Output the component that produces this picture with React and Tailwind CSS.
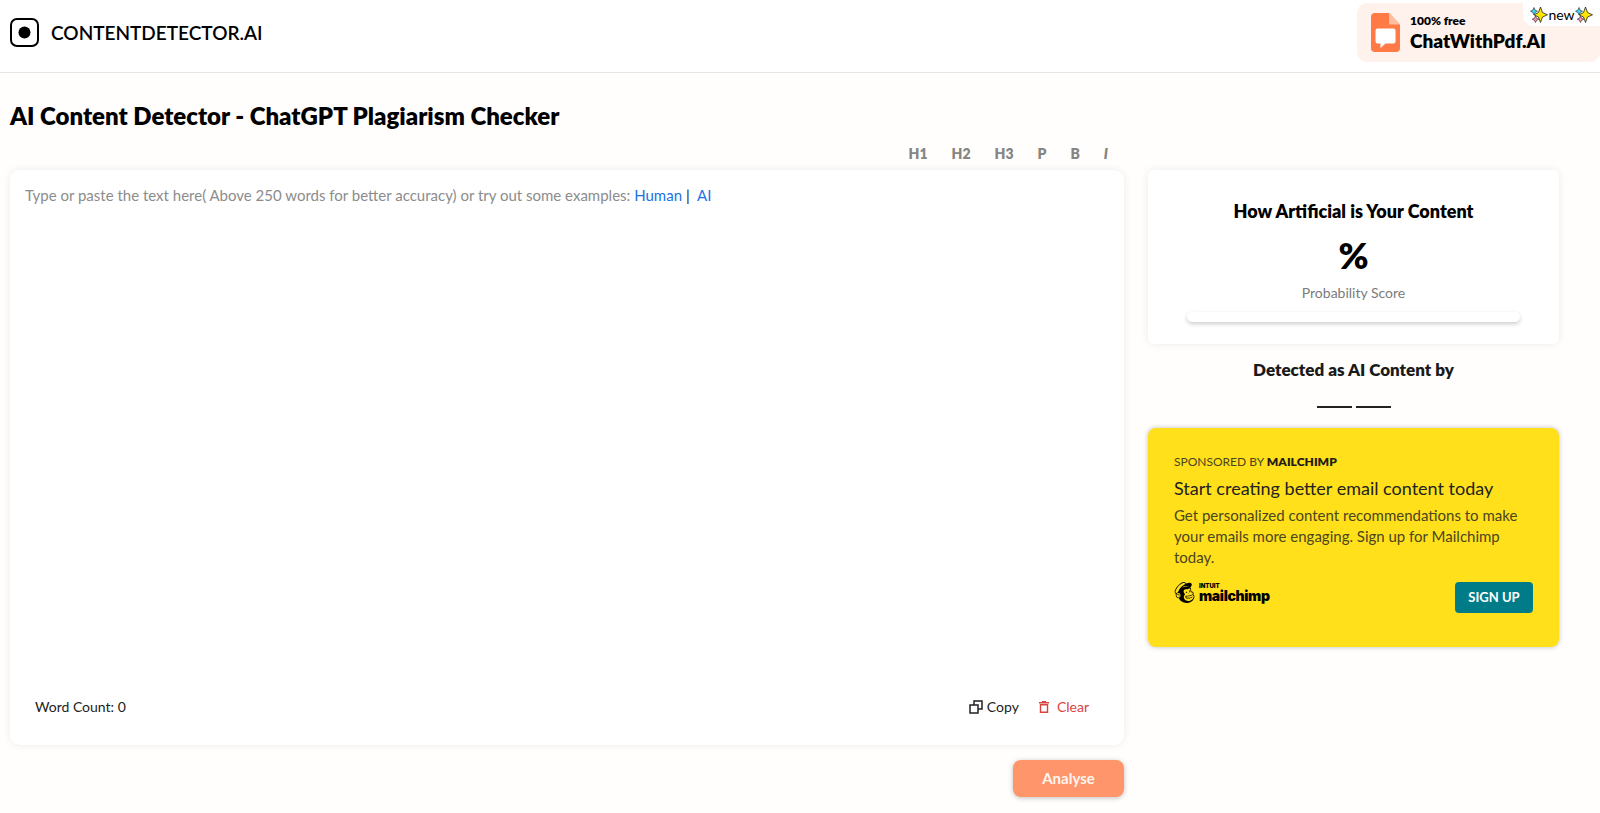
import { useState } from "react"
import { SiMailchimp } from "react-icons/si"

const formats = ["H1", "H2", "H3", "P", "B", "I"]

const examples = {
  human: "I grew up in a small town by the sea, and most mornings I walked to school along the harbour.",
  ai: "Artificial intelligence is a branch of computer science that focuses on creating intelligent systems.",
}

function Sparkles() {
  return (
    <svg width="18" height="18" viewBox="0 0 18 18" aria-hidden="true" className="shrink-0">
      <path
        d="M10.500 1 L12.500 6.500 L17.500 8.800 L12.500 11 L10.500 16.500 L8.500 11 L4 8.800 L8.500 6.500 Z"
        fill="#ffe600"
        stroke="#222"
        strokeWidth="0.8"
        strokeLinejoin="round"
      />
      <path d="M4 1.500 L5.200 4.200 L7.500 5.200 L5.200 6.400 L4 9 L2.800 6.400 L0.500 5.200 L2.800 4.200 Z" fill="#3fd6f7" stroke="#222" strokeWidth="0.6" />
      <path d="M5.500 10 L6.600 12.200 L8.800 13.200 L6.600 14.300 L5.500 16.500 L4.400 14.300 L2.200 13.200 L4.400 12.200 Z" fill="#f990a8" stroke="#222" strokeWidth="0.6" />
    </svg>
  )
}

function PdfIcon() {
  return (
    <svg width="29" height="39" viewBox="0 0 29 39" aria-hidden="true">
      <path d="M4 0 H18 L29 11.5 V35 A4 4 0 0 1 25 39 H4 A4 4 0 0 1 0 35 V4 A4 4 0 0 1 4 0 Z" fill="#ff7a45" />
      <path d="M18 0 L29 11.5 H18 Z" fill="#ffbda2" />
      <path d="M6.5 15.5 H22.5 A2 2 0 0 1 24.5 17.5 V28.5 A2 2 0 0 1 22.5 30.5 H14.5 L9.5 35 V30.5 H6.5 A2 2 0 0 1 4.5 28.5 V17.5 A2 2 0 0 1 6.5 15.5 Z" fill="#fff" />
    </svg>
  )
}

function Header() {
  return (
    <header className="flex h-[73px] items-start justify-between border-b border-[#e9e5e3] bg-white">
      <a href="#home" className="flex items-center gap-3 pt-[18px] pl-2.5 text-black">
        <svg width="29" height="29" viewBox="0 0 29 29" aria-hidden="true">
          <rect x="1" y="1" width="27" height="27" rx="6" fill="none" stroke="#000" strokeWidth="2" />
          <circle cx="14.5" cy="14.5" r="6" fill="#000" />
        </svg>
        <span className="text-[19px] leading-6 font-semibold">CONTENTDETECTOR.AI</span>
      </a>
      <a
        href="#chatwithpdf"
        className="relative mt-[3px] flex h-[59px] w-[243px] items-center gap-2.5 rounded-[10px] bg-[#fff1ec] pl-3.5 text-black"
      >
        <PdfIcon />
        <span className="flex flex-col">
          <span className="text-xs leading-4 font-extrabold">100% free</span>
          <span className="text-[19px] leading-6 font-extrabold">ChatWithPdf.AI</span>
        </span>
        <span className="absolute -top-[3px] right-0 flex h-[26px] w-[77px] items-center justify-center rounded-bl-[10px] bg-white pt-1 text-sm leading-4">
          <Sparkles />
          new
          <Sparkles />
        </span>
      </a>
    </header>
  )
}

function Editor() {
  const [text, setText] = useState("")
  const words = text.trim() ? text.trim().split(/\s+/).length : 0

  return (
    <section className="min-w-0 flex-1">
      <div className="flex h-[33px] items-center justify-end gap-6 pr-4 text-sm font-extrabold text-[#858585]">
        {formats.map((name) => (
          <button key={name} type="button" className={name === "I" ? "italic" : ""}>
            {name}
          </button>
        ))}
      </div>

      <div className="flex min-h-[575px] flex-col rounded-[10px] bg-white px-[15px] pt-[15px] pb-7 shadow-[0_0_8px_rgba(0,0,0,0.08)]">
        <label htmlFor="content" className="text-[15px] leading-5 text-[#8c8c8c]">
          Type or paste the text here( Above 250 words for better accuracy) or try out some examples:{" "}
          <a href="#human" onClick={() => setText(examples.human)} className="text-[#1a73e8]">
            Human
          </a>
          <span className="px-1 text-[#222]">|</span>{" "}
          <a href="#ai" onClick={() => setText(examples.ai)} className="text-[#1a73e8]">
            AI
          </a>
        </label>
        <textarea
          id="content"
          value={text}
          onChange={(e) => setText(e.target.value)}
          className="w-full flex-1 resize-none text-[15px] leading-5 outline-none"
        />
        <div className="flex items-center justify-between px-2.5 text-sm leading-5 text-[#222]">
          <span>Word Count: {words}</span>
          <div className="flex items-center gap-5 pr-2.5">
            <button type="button" onClick={() => navigator.clipboard.writeText(text)} className="flex items-center gap-1">
              <svg width="14" height="14" viewBox="0 0 14 14" fill="none" stroke="#222" strokeWidth="1.5" aria-hidden="true">
                <path d="M5 5 V1 H13 V9 H9" />
                <rect x="1" y="5" width="8" height="8" />
              </svg>
              Copy
            </button>
            <button type="button" onClick={() => setText("")} className="flex items-center gap-2 text-[#d9443f]">
              <svg width="10" height="12" viewBox="0 0 10 12" fill="none" stroke="#d9443f" strokeWidth="1.4" aria-hidden="true">
                <path d="M0 1.7 H10 M3 0.7 H7 M1.5 3.8 H8.5 V11.3 H1.5 Z" />
              </svg>
              Clear
            </button>
          </div>
        </div>
      </div>

      <div className="mt-[15px] flex justify-end">
        <button
          type="button"
          className="h-[37px] w-[111px] rounded-lg bg-[#ff956b] text-[15px] font-bold text-[#fff5f0] shadow-[0_1px_5px_rgba(0,0,0,0.25)]"
        >
          Analyse
        </button>
      </div>
    </section>
  )
}

function ScoreCard() {
  return (
    <section className="flex flex-col items-center rounded-md bg-white px-[39px] pt-[29px] pb-[22px] shadow-[0_0_8px_rgba(0,0,0,0.08)]">
      <h2 className="text-[18px] leading-6 font-extrabold text-black">How Artificial is Your Content</h2>
      <p className="mt-3 text-[36px] leading-10 font-extrabold text-black">%</p>
      <p className="mt-2 text-sm leading-5 text-[#7b7b7b]">Probability Score</p>
      <div
        role="progressbar"
        aria-label="Probability Score"
        className="mt-[9px] h-2.5 w-full rounded-md bg-white shadow-[0_2px_4px_rgba(0,0,0,0.2)]"
      />
    </section>
  )
}

function SponsorCard() {
  return (
    <section className="min-h-[219px] rounded-lg bg-[#ffe01b] px-[26px] pt-6 text-[#222] shadow-[0_0_5px_rgba(0,0,0,0.25)]">
      <p className="text-xs leading-5 text-[#4b4520]">
        SPONSORED BY <b className="font-extrabold text-[#241c15]">MAILCHIMP</b>
      </p>
      <h3 className="mt-1 text-[18px] leading-6">Start creating better email content today</h3>
      <p className="mt-[5px] text-[15px] leading-[21px] text-[#4b4520]">
        Get personalized content recommendations to make your emails more engaging. Sign up for Mailchimp today.
      </p>
      <div className="mt-3.5 flex items-start justify-between">
        <div className="flex items-center gap-1 text-black">
          <SiMailchimp size={21} />
          <div className="flex flex-col font-[Inter] font-black">
            <span className="text-[6px] leading-[6px]">INTUIT</span>
            <span className="text-sm leading-[14px] tracking-tight">mailchimp</span>
          </div>
        </div>
        <button type="button" className="h-[31px] w-[78px] rounded bg-[#007c89] text-[13px] font-bold text-white">
          SIGN UP
        </button>
      </div>
    </section>
  )
}

export default function App() {
  return (
    <div className="min-h-screen bg-[#fffefc] font-[Lato,sans-serif]">
      <Header />
      <main className="px-2.5 pt-[27px] pb-4">
        <h1 className="text-[24px] leading-8 font-extrabold text-black">AI Content Detector - ChatGPT Plagiarism Checker</h1>
        <div className="mt-[5px] flex gap-6 pr-[31px]">
          <Editor />
          <aside className="w-[411px] shrink-0 pt-[33px]">
            <ScoreCard />
            <h2 className="mt-4 text-center text-[17px] leading-5 font-extrabold text-[#1a1a1a]">Detected as AI Content by</h2>
            <div className="mt-[26px] mb-5 flex justify-center gap-1">
              <span className="h-0.5 w-[35px] bg-[#222]" />
              <span className="h-0.5 w-[35px] bg-[#222]" />
            </div>
            <SponsorCard />
          </aside>
        </div>
      </main>
    </div>
  )
}
